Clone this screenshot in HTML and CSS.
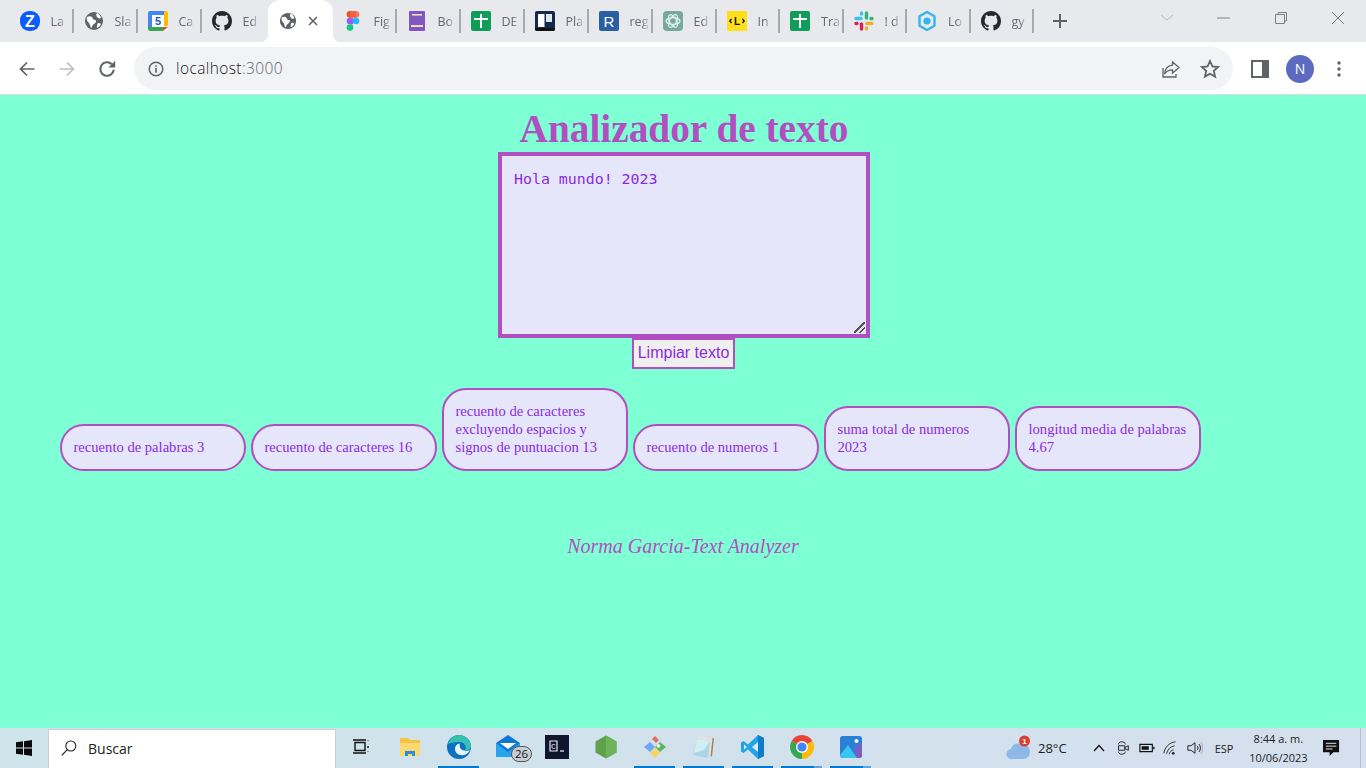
FILE: index.html
```html
<!DOCTYPE html>
<html lang="es">
<head>
	<meta charset="UTF-8">
	<title>Analizador de texto</title>
	<link rel="stylesheet" href="styles.css">
</head>
<body>
<svg class="sprite" xmlns="http://www.w3.org/2000/svg">
	<symbol id="i-globe" viewBox="0 0 20 20">
		<circle cx="10" cy="10" r="9" fill="#5f6368"/>
		<path d="M3 6c2-1 4-1 5 0s1 3 3 3 1 3-1 4-2 4-3 4c-1-2-1-4-2-5S2 9 3 6zM13 2c2 1 4 3 4 5-2 1-3 0-4-1s-1-3 0-4zM14 12c1 0 2 0 3 1-1 2-2 3-4 4 0-2 0-4 1-5z" fill="#fff"/>
	</symbol>
	<symbol id="i-github" viewBox="0 0 16 16">
		<path fill="#24292f" d="M8 0C3.58 0 0 3.58 0 8c0 3.54 2.29 6.53 5.47 7.59.4.07.55-.17.55-.38 0-.19-.01-.82-.01-1.49-2.01.37-2.53-.49-2.69-.94-.09-.23-.48-.94-.82-1.13-.28-.15-.68-.52-.01-.53.63-.01 1.08.58 1.23.82.72 1.21 1.87.87 2.33.66.07-.52.28-.87.51-1.07-1.78-.2-3.64-.89-3.64-3.95 0-.87.31-1.59.82-2.15-.08-.2-.36-1.02.08-2.12 0 0 .67-.21 2.2.82.64-.18 1.32-.27 2-.27s1.36.09 2 .27c1.53-1.04 2.2-.82 2.2-.82.44 1.1.16 1.92.08 2.12.51.56.82 1.27.82 2.15 0 3.07-1.87 3.75-3.65 3.95.29.25.54.73.54 1.48 0 1.07-.01 1.93-.01 2.2 0 .21.15.46.55.38A8.01 8.01 0 0 0 16 8c0-4.42-3.58-8-8-8z"/>
	</symbol>
	<symbol id="i-sheet" viewBox="0 0 20 20">
		<rect width="20" height="20" rx="2" fill="#0f9d58"/>
		<path d="M9 3h2v4h6v2h-6v8H9V9H3V7h6z" fill="#fff"/>
	</symbol>
</svg>

<div class="tabstrip">
	<div class="tab">
		<svg class="favicon" viewBox="0 0 20 20"><rect width="20" height="20" rx="9" fill="#0b5cff"/><text x="10" y="15.5" class="fav-letter">Z</text></svg>
		<span class="tab-label">La</span>
	</div>
	<div class="tab">
		<svg class="favicon"><use href="#i-globe"/></svg>
		<span class="tab-label">Sla</span>
	</div>
	<div class="tab">
		<svg class="favicon" viewBox="0 0 20 20">
			<rect width="20" height="20" rx="2" fill="#fff"/>
			<path d="M0 2a2 2 0 0 1 2-2h14v4H4v12H0z" fill="#4285f4"/>
			<path d="M16 0h2a2 2 0 0 1 2 2v13h-4z" fill="#fbbc04"/>
			<path d="M0 16h15v4H2a2 2 0 0 1-2-2z" fill="#34a853"/>
			<path d="M15 16h5l-5 4z" fill="#ea4335"/>
			<text x="10" y="14" class="fav-cal">5</text>
		</svg>
		<span class="tab-label">Ca</span>
	</div>
	<div class="tab tab-plain">
		<svg class="favicon"><use href="#i-github"/></svg>
		<span class="tab-label">Ed</span>
	</div>
	<div class="tab tab-active">
		<svg class="favicon favicon-sm"><use href="#i-globe"/></svg>
		<svg class="tab-close" viewBox="0 0 10 10"><path d="M1 1l8 8M9 1l-8 8" stroke="#5f6368" stroke-width="1.6"/></svg>
	</div>
	<div class="tab">
		<svg class="favicon" viewBox="0 0 20 20">
			<circle cx="7" cy="3.4" r="3.3" fill="#f24e1e"/><circle cx="13" cy="3.4" r="3.3" fill="#ff7262"/>
			<rect x="7" y="0.1" width="6" height="6.6" fill="#f2603f"/>
			<circle cx="7" cy="10" r="3.3" fill="#a259ff"/><circle cx="13" cy="10" r="3.3" fill="#1abcfe"/>
			<rect x="7" y="6.7" width="3" height="6.6" fill="#a259ff"/>
			<circle cx="7" cy="16.6" r="3.3" fill="#0acf83"/>
		</svg>
		<span class="tab-label">Fig</span>
	</div>
	<div class="tab">
		<svg class="favicon" viewBox="0 0 20 20">
			<rect x="2" y="0" width="16" height="20" rx="1" fill="#7e57c2"/>
			<rect x="4" y="14" width="12" height="2" fill="#f3dcae"/><rect x="5" y="3" width="10" height="1.6" fill="#f3dcae"/>
		</svg>
		<span class="tab-label">Bo</span>
	</div>
	<div class="tab">
		<svg class="favicon"><use href="#i-sheet"/></svg>
		<span class="tab-label">DE</span>
	</div>
	<div class="tab">
		<svg class="favicon" viewBox="0 0 20 20">
			<rect width="20" height="20" rx="2" fill="#14284b"/>
			<rect x="3" y="3" width="6.500" height="13" fill="#fff"/><rect x="11" y="3" width="6" height="8" fill="#dfe6ee"/>
			<path d="M0 17h20v1a2 2 0 0 1-2 2H2a2 2 0 0 1-2-2z" fill="#111"/>
		</svg>
		<span class="tab-label">Pla</span>
	</div>
	<div class="tab">
		<svg class="favicon" viewBox="0 0 20 20"><rect width="20" height="20" rx="2" fill="#2b5fa3"/><text x="10" y="15.5" class="fav-r">R</text></svg>
		<span class="tab-label">reg</span>
	</div>
	<div class="tab">
		<svg class="favicon" viewBox="0 0 20 20">
			<rect width="20" height="20" rx="4" fill="#74aa9c"/>
			<g fill="none" stroke="#e6f2ee" stroke-width="1.2">
				<ellipse cx="10" cy="10" rx="7" ry="3.4"/>
				<ellipse cx="10" cy="10" rx="7" ry="3.4" transform="rotate(60 10 10)"/>
				<ellipse cx="10" cy="10" rx="7" ry="3.4" transform="rotate(120 10 10)"/>
			</g>
		</svg>
		<span class="tab-label">Ed</span>
	</div>
	<div class="tab tab-late">
		<svg class="favicon" viewBox="0 0 20 20"><rect width="20" height="20" fill="#ffe01b"/><text x="10" y="13.6" class="fav-l">L</text><path d="M4.5 8L2.8 10l1.700 2M15.500 8l1.700 2-1.700 2" fill="none" stroke="#111" stroke-width="1.300"/></svg>
		<span class="tab-label">In</span>
	</div>
	<div class="tab tab-late">
		<svg class="favicon"><use href="#i-sheet"/></svg>
		<span class="tab-label">Tra</span>
	</div>
	<div class="tab tab-late">
		<svg class="favicon" viewBox="0 0 20 20">
			<g stroke-width="3.400" stroke-linecap="round">
				<path d="M2 7.500h5" stroke="#36c5f0"/><path d="M7.500 2v1" stroke="#36c5f0"/>
				<path d="M12.500 2v5" stroke="#2eb67d"/><path d="M18 7.500h-1" stroke="#2eb67d"/>
				<path d="M18 12.500h-5" stroke="#ecb22e"/><path d="M12.500 18v-1" stroke="#ecb22e"/>
				<path d="M7.500 18v-5" stroke="#e01e5a"/><path d="M2 12.500h1" stroke="#e01e5a"/>
			</g>
		</svg>
		<span class="tab-label">! d</span>
	</div>
	<div class="tab tab-late">
		<svg class="favicon" viewBox="0 0 20 20">
			<path d="M10 1l7.500 4.300v9.400L10 19l-7.500-4.300V5.300z" fill="none" stroke="#35b5ee" stroke-width="2.400" stroke-linejoin="round"/>
			<circle cx="10" cy="10" r="3.600" fill="#35b5ee"/>
		</svg>
		<span class="tab-label">Lo</span>
	</div>
	<div class="tab tab-late">
		<svg class="favicon"><use href="#i-github"/></svg>
		<span class="tab-label">gy</span>
	</div>
	<svg class="tab-new" viewBox="0 0 16 16"><path d="M8 1v14M1 8h14" stroke="#5f6368" stroke-width="2"/></svg>
	<div class="window-controls">
		<svg class="win-icon" viewBox="0 0 14 14"><path d="M1 4l6 5 6-5" fill="none" stroke="#b4b7bc" stroke-width="1"/></svg>
		<svg class="win-icon" viewBox="0 0 14 14"><path d="M0 7h13" stroke="#7d8086" stroke-width="1"/></svg>
		<svg class="win-icon" viewBox="0 0 14 14"><path d="M1.500 3.500h9v9h-9zM4 3.500V1.500h8.500v8.500h-2" fill="none" stroke="#7d8086" stroke-width="1"/></svg>
		<svg class="win-icon" viewBox="0 0 14 14"><path d="M1 1l12 12M13 1L1 13" stroke="#7d8086" stroke-width="1"/></svg>
	</div>
</div>

<div class="toolbar">
	<svg class="tool-icon" viewBox="0 0 16 16"><path d="M15.500 8H1.500M8 1.500L1.500 8 8 14.500" fill="none" stroke="#5f6368" stroke-width="1.700"/></svg>
	<svg class="tool-icon" viewBox="0 0 16 16"><path d="M.5 8h14M8 1.500L14.500 8 8 14.500" fill="none" stroke="#bdc0c4" stroke-width="1.700"/></svg>
	<svg class="tool-icon tool-reload" viewBox="0 0 16 16"><path d="M14 8.500A6 6 0 1 1 12.300 3.800" fill="none" stroke="#5f6368" stroke-width="1.800"/><path d="M15.300.7v6h-6z" fill="#5f6368"/></svg>
	<div class="omnibox">
		<svg class="omni-info" viewBox="0 0 16 16"><circle cx="8" cy="8" r="6.800" fill="none" stroke="#5f6368" stroke-width="1.500"/><path d="M7.200 7h1.600v4.800H7.200zM7.200 4.200h1.600v1.600H7.200z" fill="#5f6368"/></svg>
		<span class="omni-url">localhost<span class="omni-port">:3000</span></span>
		<svg class="omni-share" viewBox="0 0 20 20"><path d="M11.500 3l6.500 5.500-6.500 5.500v-3.200C7.500 10.800 5 12.300 3.500 15c.4-5 3.500-8.200 8-8.800zM2 9v9h13v-3" fill="none" stroke="#5f6368" stroke-width="1.300"/></svg>
		<svg class="omni-star" viewBox="0 0 20 20"><path d="M10 2l2.400 5.400 5.800.6-4.400 3.900 1.300 5.700L10 14.700l-5.100 2.900 1.300-5.700L1.800 8l5.800-.6z" fill="none" stroke="#5f6368" stroke-width="1.800"/></svg>
	</div>
	<svg class="side-panel" viewBox="0 0 18 18"><path d="M0 0h18v18H0z" fill="#5f6368"/><path d="M2 2h9v14H2z" fill="#fff"/></svg>
	<div class="avatar">N</div>
	<svg class="menu-dots" viewBox="0 0 4 16"><circle cx="2" cy="2" r="1.700"/><circle cx="2" cy="8" r="1.700"/><circle cx="2" cy="14" r="1.700"/></svg>
</div>

<main class="page">
	<h1 class="title">Analizador de texto</h1>
	<textarea class="input-text" spellcheck="false">Hola mundo! 2023</textarea>
	<button class="clear-btn">Limpiar texto</button>
	<section class="metrics">
		<div class="metric">recuento de palabras 3</div>
		<div class="metric">recuento de caracteres 16</div>
		<div class="metric">recuento de caracteres excluyendo espacios y signos de puntuacion 13</div>
		<div class="metric">recuento de numeros 1</div>
		<div class="metric">suma total de numeros 2023</div>
		<div class="metric">longitud media de palabras 4.67</div>
	</section>
	<footer class="credit">Norma Garcia-Text Analyzer</footer>
</main>

<div class="taskbar">
	<div class="start">
		<svg class="start-logo" viewBox="0 0 16 16"><path d="M0 2.300l7-1v6.300H0zM8 1.200L16 0v7.600H8zM0 8.500h7v6.200l-7-1zM8 8.500h8V16l-8-1.200z" fill="#0b0b0b"/></svg>
	</div>
	<div class="search">
		<svg class="search-icon" viewBox="0 0 16 16"><circle cx="9.800" cy="6" r="5" fill="none" stroke="#222" stroke-width="1.100"/><path d="M6.300 9.600L.8 15.400" stroke="#222" stroke-width="1.200"/></svg>
		<span>Buscar</span>
	</div>
	<div class="app">
		<svg class="app-icon" viewBox="0 0 20 20"><path d="M4 5.500h10v8H4zM2 3h13M2 16h13M17 3.500v.5M17 9v2M17 14.500v.5" fill="none" stroke="#111" stroke-width="1.400"/></svg>
	</div>
	<div class="app">
		<svg class="app-icon-lg" viewBox="0 0 24 24"><path d="M2 3h8l2 2h10v16H2z" fill="#f5c242"/><path d="M2 8h20v13H2z" fill="#fbd872"/><path d="M7 21v-5h10v5h-3v-2h-4v2z" fill="#2a8fd8"/></svg>
	</div>
	<div class="app app-open">
		<svg class="app-icon-lg" viewBox="0 0 24 24"><circle cx="12" cy="12" r="12" fill="#0c70c4"/><path d="M1 9C3 3 8 0 12 0c6 0 12 5 12 11 0 3-3 5-6 4 2-3 0-8-6-8-5 0-9 1-11 2z" fill="#35c1b0"/><path d="M8 14c0 4 4 7 9 6 3-.5 5-3 6-5-2 1-4 1-6 .5-4-1-5-4-4-7-3 0-5 3-5 5.500z" fill="#e8f3fb"/></svg>
	</div>
	<div class="app">
		<svg class="app-icon-lg mail-icon" viewBox="0 0 24 24"><path d="M0 8l12-8 12 8v14H0z" fill="#0f78d4"/><path d="M4 8h16l-8 6z" fill="#fff"/><path d="M0 8l12 9 12-9v14H0z" fill="#29a3ec"/></svg>
		<span class="mail-badge">26</span>
	</div>
	<div class="app">
		<svg class="app-icon-lg" viewBox="0 0 24 24"><rect width="24" height="24" fill="#10162f"/><path d="M5 6h7v10H5z" fill="none" stroke="#e6e6ea" stroke-width="1.200"/><text x="8.500" y="14" class="term-c">C</text><path d="M15 16h4" stroke="#e6e6ea" stroke-width="1.300"/></svg>
	</div>
	<div class="app">
		<svg class="app-icon-lg" viewBox="0 0 24 24"><path d="M12 .5l10.500 6v11L12 23.500 1.500 17.500v-11z" fill="#5fa04e"/><path d="M12 .5l10.500 6v11L12 23.500z" fill="#6cb35a"/></svg>
	</div>
	<div class="app app-open">
		<svg class="app-icon-lg" viewBox="0 0 24 24"><path d="M7 7l5 5-5 5-6-5z" fill="#6fa8f5"/><path d="M12 1l4 4-3 3-4-4z" fill="#e86a6a"/><path d="M17 7l6 5-6 5-5-5z" fill="#5cb85c"/><path d="M12 13l5 5-5 5-5-5z" fill="#f7d565"/><circle cx="15.500" cy="11" r="1.800" fill="#fff"/></svg>
	</div>
	<div class="app app-open">
		<svg class="app-icon-lg" viewBox="0 0 24 24"><path d="M7 1l15 2.500-2 18-13-2z" fill="#e4e2da"/><path d="M20.500 3l1.500.5-2 18-1.500-.3z" fill="#a6835a"/><path d="M5 4l13 2-2 17-15-3z" fill="#a9d6e6"/><path d="M5 4l13 2-6 9-10 3z" fill="#d3edf4"/></svg>
	</div>
	<div class="app app-open">
		<svg class="app-icon-lg" viewBox="0 0 24 24"><path d="M17 0l6 3v18l-6 3L7 14.500 2.500 18 0 16.500v-9L2.500 6 7 9.500z" fill="#23a3e8"/><path d="M17 0l6 3v18l-6 3z" fill="#0e7cc9"/><path d="M17 7l-6 5 6 5z" fill="#d7ecf9"/><path d="M3 9.500L6 12l-3 2.500z" fill="#d7ecf9"/></svg>
	</div>
	<div class="app app-open app-split">
		<svg class="app-icon-lg" viewBox="0 0 24 24">
			<path d="M12 12L1.610 6A12 12 0 0 1 22.390 6z" fill="#ea4335"/>
			<path d="M12 12L22.390 6A12 12 0 0 1 12 24z" fill="#fbbc04"/>
			<path d="M12 12L12 24A12 12 0 0 1 1.610 6z" fill="#34a853"/>
			<circle cx="12" cy="12" r="6" fill="#fff"/><circle cx="12" cy="12" r="4.600" fill="#4285f4"/>
		</svg>
	</div>
	<div class="app app-open app-split">
		<svg class="app-icon-lg" viewBox="0 0 24 24">
			<rect x="1" y="1" width="22" height="22" rx="3" fill="#2a7fd6"/>
			<path d="M16 23h4a3 3 0 0 0 3-3V8l-7 4z" fill="#7a5fc0"/>
			<path d="M1 20l8-10 9 13H4a3 3 0 0 1-3-3z" fill="#36c6f0"/>
			<circle cx="17.500" cy="6" r="2" fill="#fff"/>
		</svg>
	</div>
	<div class="tray">
		<div class="weather">
			<svg class="cloud" viewBox="0 0 26 26"><path d="M6 24a5 5 0 0 1-1-10c1-5 7-7 11-4 5-1 8 3 8 7s-3 7-7 7z" fill="#8fb8e6"/><circle cx="18.500" cy="6" r="5.500" fill="#d9402f"/><text x="18.500" y="9" class="cloud-n">1</text></svg>
			<span>28°C</span>
		</div>
		<svg class="tray-chevron" viewBox="0 0 12 8"><path d="M1 7l5-5.500L11 7" fill="none" stroke="#111" stroke-width="1.300"/></svg>
		<svg class="tray-icon" viewBox="0 0 16 18"><path d="M3 5c0-4 7-4 8 0M3 13c0 4 7 4 8 0M3 6.500h7v5H3zM10 8.500l4-2v5l-4-2" fill="none" stroke="#222" stroke-width="1.100"/></svg>
		<svg class="tray-icon" viewBox="0 0 18 18"><path d="M1 5h14v8H1z" fill="none" stroke="#111" stroke-width="1.300"/><path d="M3 7h8v4H3z" fill="#111"/><path d="M16 7.500h1.500v3H16z" fill="#111"/></svg>
		<svg class="tray-icon" viewBox="0 0 18 18"><path d="M1 15C2 8 7 3 14 2M4 15.500c1-4.500 4-8 9-9M7 16c.5-2.500 2.500-4.500 5-5" fill="none" stroke="#222" stroke-width="1"/><circle cx="11.500" cy="15" r="1.500" fill="#222"/></svg>
		<svg class="tray-icon" viewBox="0 0 18 18"><path d="M1 6.500h3.500L9 3v12l-4.500-3.500H1zM11.500 6.500c1.200 1.500 1.200 3.500 0 5M13.500 4.500c2.200 2.500 2.200 6.500 0 9" fill="none" stroke="#222" stroke-width="1.100"/><path d="M15.500 2.500c3 3.500 3 9.500 0 13" fill="none" stroke="#9aa3ad" stroke-width="1"/></svg>
		<span class="tray-lang">ESP</span>
		<div class="clock"><span>8:44 a. m.</span><span>10/06/2023</span></div>
		<svg class="notify" viewBox="0 0 18 18"><path d="M0 0h17v13h-6l-4 4v-4H0z" fill="#111"/><path d="M3 3.500h11M3 6.500h11M3 9.500h7" stroke="#e8eef3" stroke-width="1"/></svg>
		<div class="show-desktop"></div>
	</div>
</div>
</body>
</html>
```

FILE: styles.css
```css
* {
	box-sizing: border-box;
}

html, body {
	margin: 0;
	height: 100%;
	overflow: hidden;
}

body {
	display: flex;
	flex-direction: column;
	width: 1366px;
	height: 768px;
	font-family: "Open Sans", "Liberation Sans", sans-serif;
	background-color: aquamarine;
}

.sprite {
	display: none;
}

/* tab strip */
.tabstrip {
	display: flex;
	flex: none;
	align-items: flex-start;
	height: 42px;
	padding-left: 9.5px;
	background-color: #e7e9ed;
}

.tab {
	display: flex;
	flex: none;
	align-items: center;
	gap: 11px;
	width: 64px;
	height: 24px;
	margin-top: 9px;
	padding-left: 10px;
	border-right: 2px solid #a8aaaf;
}

.tab-late {
	width: 63.5px;
}

.tab-plain {
	border-right: 0;
}

.tab-active {
	position: relative;
	gap: 11px;
	width: 64.5px;
	height: 42px;
	margin-top: 0;
	margin-left: 2.5px;
	padding-left: 11px;
	border-right: 0;
	border-radius: 12px 12px 0 0;
	background-color: #fff;
}

.tab-active::before,
.tab-active::after {
	content: "";
	position: absolute;
	bottom: 0;
	width: 8px;
	height: 8px;
}

.tab-active::before {
	left: -8px;
	background: radial-gradient(circle at 0 0, #e7e9ed 8px, #fff 8.500px);
}

.tab-active::after {
	right: -8px;
	background: radial-gradient(circle at 100% 0, #e7e9ed 8px, #fff 8.500px);
}

.favicon {
	flex: none;
	width: 20px;
	height: 20px;
}

.favicon-sm {
	width: 18px;
	height: 18px;
}

.tab-close {
	flex: none;
	width: 10px;
	height: 10px;
}

.tab-label {
	white-space: nowrap;
	font-size: 12.500px;
	color: #666a70;
	-webkit-mask-image: linear-gradient(to right, #000 65%, rgba(0, 0, 0, .25));
	mask-image: linear-gradient(to right, #000 65%, rgba(0, 0, 0, .25));
}

.fav-letter {
	font: bold 16px "Liberation Sans", sans-serif;
	fill: #fff;
	text-anchor: middle;
}

.fav-cal {
	font: bold 11px "Liberation Sans", sans-serif;
	fill: #1a57c8;
	text-anchor: middle;
}

.fav-r {
	font: 15px "Liberation Sans", sans-serif;
	fill: #fff;
	text-anchor: middle;
}

.fav-l {
	font: bold 10px "Liberation Sans", sans-serif;
	fill: #111;
	text-anchor: middle;
}

.tab-new {
	flex: none;
	width: 16px;
	height: 16px;
	margin: 13px 0 0 18px;
}

.window-controls {
	display: flex;
	gap: 43px;
	margin: 11px 0 0 auto;
	padding-right: 21px;
}

.win-icon {
	width: 14px;
	height: 14px;
}

/* toolbar */
.toolbar {
	display: flex;
	flex: none;
	align-items: center;
	height: 53px;
	padding: 1px 0 0 19px;
	border-bottom: 1px solid #dadce0;
	background-color: #fff;
}

.tool-icon {
	flex: none;
	width: 16px;
	height: 16px;
	margin-right: 24px;
}

.tool-reload {
	width: 18px;
	height: 18px;
	margin-left: -1px;
	margin-right: 23px;
}

.omnibox {
	display: flex;
	flex: none;
	align-items: center;
	width: 1099px;
	height: 43px;
	margin-left: -5px;
	padding: 0 13px 0 14px;
	border-radius: 22px;
	background-color: #f1f3f4;
}

.omni-info {
	width: 16px;
	height: 16px;
}

.omni-url {
	margin: 0 0 2px 12px;
	font-size: 15.500px;
	font-weight: 300;
	letter-spacing: .4px;
	color: #202124;
}

.omni-port {
	color: #5f6368;
}

.omni-share {
	width: 20px;
	height: 20px;
	margin-left: auto;
}

.omni-star {
	width: 20px;
	height: 20px;
	margin-left: 19px;
	margin-right: 0;
}

.side-panel {
	flex: none;
	width: 18px;
	height: 18px;
	margin-left: 18px;
}

.avatar {
	flex: none;
	width: 28px;
	height: 28px;
	margin-left: 17px;
	border-radius: 50%;
	font-size: 14px;
	line-height: 28px;
	text-align: center;
	color: #fff;
	background-color: #5c6bc0;
}

.menu-dots {
	flex: none;
	width: 4px;
	height: 16px;
	margin-left: 23px;
	fill: #5f6368;
}

/* app */
.page {
	flex: 1;
	min-height: 0;
	background-color: aquamarine;
}

.title {
	margin: 11px 0 0;
	padding-left: 2px;
	font-family: "Liberation Serif", serif;
	font-size: 39.300px;
	line-height: 46px;
	text-align: center;
	color: #b24fc0;
}

.input-text {
	display: block;
	width: 372px;
	height: 186px;
	margin: 0 0 0 calc(50% - 185px);
	padding: 14px 12px;
	border: 4px solid #b24fc0;
	font-family: "DejaVu Sans Mono", monospace;
	font-size: 14.900px;
	color: #8a2be2;
	background-color: lavender;
}

.input-text::-webkit-resizer {
	background: linear-gradient(135deg, transparent 45%, #555 45%, #555 56%, transparent 56%, transparent 70%, #555 70%, #555 81%, transparent 81%) 3px 3px / 11px 11px no-repeat;
}

.clear-btn {
	display: block;
	width: 103px;
	height: 31px;
	margin: 0 auto;
	padding: 0 0 2px 1px;
	border: 2px solid #b24fc0;
	font-family: "Liberation Sans", sans-serif;
	font-size: 16px;
	color: #8a2be2;
	background-color: #efefef;
}

.metrics {
	display: flex;
	align-items: flex-end;
	gap: 5px;
	margin-top: 19px;
	padding-left: 60px;
}

.metric {
	width: 186px;
	padding: 12px 10px 13px 11.500px;
	border: 2px solid #b24fc0;
	border-radius: 24px;
	font-family: "Liberation Serif", serif;
	font-size: 14.600px;
	line-height: 18px;
	color: #8a2be2;
	background-color: lavender;
}

.credit {
	margin-top: 64px;
	font-family: "Liberation Serif", serif;
	font-size: 20px;
	font-style: italic;
	text-align: center;
	color: #b24fc0;
}

/* taskbar */
.taskbar {
	display: flex;
	flex: none;
	height: 40px;
	background: linear-gradient(to right, #cde4ea, #d5dfee);
}

.start {
	display: flex;
	flex: none;
	align-items: center;
	justify-content: center;
	width: 48px;
}

.start-logo {
	width: 16px;
	height: 16px;
}

.search {
	display: flex;
	flex: none;
	align-items: center;
	gap: 11px;
	width: 288px;
	margin-top: 1px;
	padding: 0 0 2px 12px;
	border: 1px solid #c9ced2;
	border-bottom: 0;
	font-size: 14px;
	color: #222;
	background-color: #fff;
}

.search-icon {
	width: 16px;
	height: 16px;
}

.app {
	position: relative;
	display: flex;
	flex: none;
	align-items: center;
	justify-content: center;
	width: 49px;
	border-bottom: 2px solid transparent;
}

.app-open {
	border-image: linear-gradient(to right, transparent 4.500px, #0078d4 4.500px, #0078d4 44.500px, transparent 44.500px) 1;
}

.app-split {
	border-image: linear-gradient(to right, transparent 4.500px, #0078d4 4.500px, #0078d4 36.500px, #62a4da 36.500px, #62a4da 44.500px, transparent 44.500px) 1;
}

.app-icon {
	width: 20px;
	height: 20px;
}

.app-icon-lg {
	width: 24px;
	height: 24px;
}

.mail-badge {
	position: absolute;
	top: 18px;
	left: 28px;
	width: 21px;
	height: 16px;
	border: 1px solid #555;
	border-radius: 8px;
	font-size: 11.500px;
	line-height: 14px;
	text-align: center;
	color: #111;
	background-color: #c8ced4;
}

.term-c {
	font: 8px "Liberation Mono", monospace;
	fill: #e6e6ea;
	text-anchor: middle;
}

.tray {
	display: flex;
	flex: 1;
	align-items: center;
	font-size: 11px;
	color: #222;
}

.weather {
	display: flex;
	align-items: center;
	gap: 6px;
	margin-left: 131px;
	font-size: 13px;
}

.cloud {
	width: 26px;
	height: 26px;
}

.cloud-n {
	font: bold 8px "Liberation Sans", sans-serif;
	fill: #fff;
	text-anchor: middle;
}

.tray-chevron {
	width: 12px;
	height: 8px;
	margin-left: 26px;
}

.tray-icon {
	width: 16px;
	height: 16px;
	margin-left: 8px;
}

.tray-chevron + .tray-icon {
	margin-left: 10px;
}

.tray-lang {
	margin-left: 12px;
}

.clock {
	display: flex;
	flex-direction: column;
	align-items: center;
	width: 60px;
	margin-left: 15px;
	font-size: 11px;
	line-height: 19px;
}

.notify {
	width: 17px;
	height: 17px;
	margin-left: 15px;
}

.show-desktop {
	align-self: stretch;
	width: 1px;
	margin-left: 20px;
	background-color: #b7bec6;
}
```
